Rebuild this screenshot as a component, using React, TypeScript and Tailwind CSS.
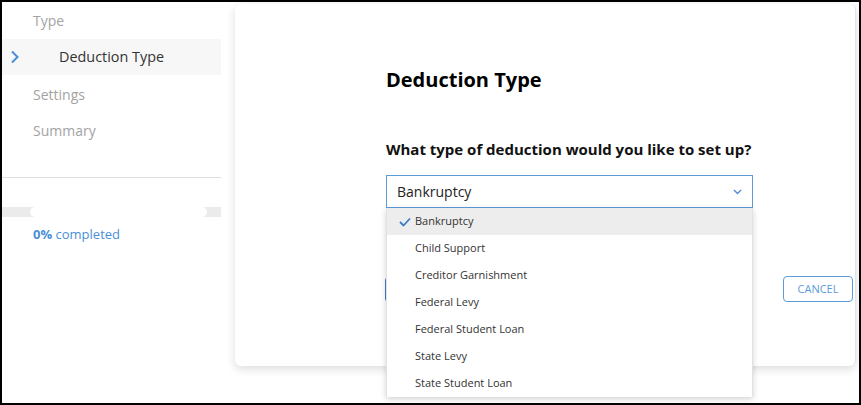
import React from "react";

const options = [
  "Bankruptcy",
  "Child Support",
  "Creditor Garnishment",
  "Federal Levy",
  "Federal Student Loan",
  "State Levy",
  "State Student Loan",
];

function Sidebar() {
  return (
    <div className="w-[219px] shrink-0 flex flex-col">
      <div className="h-9 flex items-center pl-[31px] text-[14px] text-[#a3a3a3]">Type</div>
      <div className="h-9 mt-px flex items-center bg-[#f7f7f7] text-[14.4px] text-[#333]">
        <svg width="10" height="14" viewBox="0 0 10 14" className="ml-[8px]">
          <polyline points="2,1.5 7.5,7 2,12.5" fill="none" stroke="#4a8fd6" strokeWidth="2" />
        </svg>
        <span className="ml-[39px]">Deduction Type</span>
      </div>
      <div className="h-9 mt-px flex items-center pl-[31px] text-[14px] text-[#a3a3a3]">Settings</div>
      <div className="h-9 flex items-center pl-[31px] text-[14px] text-[#a3a3a3]">Summary</div>
      <div className="mt-[29px] h-px bg-[#dedede]" />
      <div className="mt-[29px] h-[10px] bg-[#ebebeb] flex items-center">
        <div className="ml-[28px] w-[177px] h-[10px] rounded-full bg-white" />
      </div>
      <div className="mt-[8px] pl-[31px] text-[13px] text-[#4a8fd6] leading-[18px]">
        <span className="font-bold">0%</span> completed
      </div>
    </div>
  );
}

function DeductionSelect() {
  return (
    <div className="relative w-[367px]">
      <div className="h-[33px] border border-[#5b9bd9] flex items-center justify-between pl-[10px] pr-[10px] text-[14px] text-[#222] bg-white">
        <span>Bankruptcy</span>
        <svg width="9" height="6" viewBox="0 0 9 6">
          <polyline points="1,1 4.5,4.5 8,1" fill="none" stroke="#4a8fd6" strokeWidth="1.4" />
        </svg>
      </div>
      <ul className="absolute left-0 top-full w-[367px] bg-white shadow-[0_2px_6px_rgba(0,0,0,0.18)] z-10 border-x border-[#e2e2e2]">
        {options.map((o, i) => (
          <li
            key={o}
            className={
              "h-[27px] flex items-center text-[11px] text-[#333] " +
              (i === 0 ? "bg-[#ededed]" : "")
            }
          >
            <span className="w-[28px] flex justify-end pr-[4px]">
              {i === 0 && (
                <svg width="12" height="10" viewBox="0 0 12 10">
                  <polyline points="1,5 4.5,8.5 11,1.5" fill="none" stroke="#3b7bc8" strokeWidth="1.8" />
                </svg>
              )}
            </span>
            <span>{o}</span>
          </li>
        ))}
      </ul>
    </div>
  );
}

export default function App() {
  return (
    <div
      className="w-[861px] h-[405px] border-2 border-black bg-white overflow-hidden flex"
      style={{ fontFamily: '"Open Sans", "Noto Sans", sans-serif' }}
    >
      <Sidebar />
      <div className="ml-[14px] mt-[2px] w-[621px] h-[362px] shrink-0 rounded-md bg-white shadow-[0_3px_10px_rgba(0,0,0,0.14)] border-r border-[#e4e4e4] flex flex-col">
        <div className="pl-[151px] pt-[62px]">
          <h1 className="text-[20px] font-bold leading-7 text-black">Deduction Type</h1>
          <p className="mt-[45px] text-[15px] font-bold leading-5 text-[#111]">
            What type of deduction would you like to set up?
          </p>
          <div className="mt-[16px]">
            <DeductionSelect />
          </div>
        </div>
        <div className="mt-[68px] ml-[150px] mr-[2px] flex justify-between items-center">
          <button className="h-[25px] w-[90px] rounded bg-[#3d7dcc] text-white text-[11px]">NEXT</button>
          <button className="h-[26px] w-[70px] rounded border border-[#5b9bd9] text-[#5b9bd9] text-[11px] bg-white">
            CANCEL
          </button>
        </div>
      </div>
    </div>
  );
}
